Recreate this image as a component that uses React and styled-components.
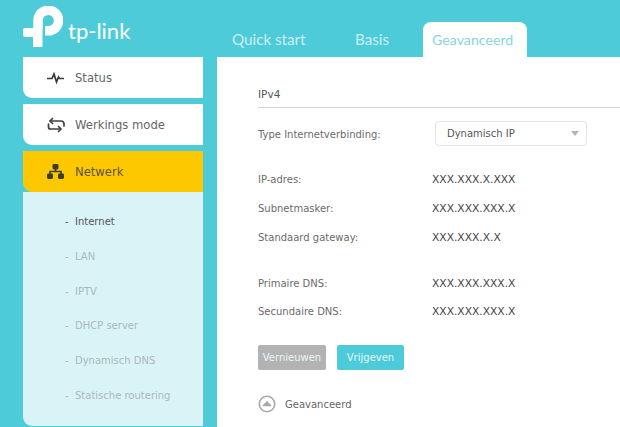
import React from 'react';
import styled, { createGlobalStyle } from 'styled-components';

const Global = createGlobalStyle`
  html, body { margin: 0; padding: 0; height: 100%; overflow: hidden; background: #4ecbd8; }
  #root { height: 100%; }
`;

const Page = styled.div`
  width: 620px;
  height: 427px;
  overflow: hidden;
  background: #4ecbd8;
  font-family: "DejaVu Sans", sans-serif;
  font-size: 10px;
  color: #666;
`;

const Header = styled.header`
  height: 57px;
  display: flex;
  align-items: flex-end;
`;

const Brand = styled.div`
  width: 217px;
  height: 57px;
  box-sizing: border-box;
  padding: 6px 0 0 23px;
  display: flex;
  align-items: flex-start;
  gap: 5px;
`;

const BrandName = styled.span`
  font-family: "Lato", sans-serif;
  font-size: 22px;
  font-weight: 400;
  line-height: 24px;
  margin-top: 13px;
  color: #fff;
`;

const Tabs = styled.nav`
  display: flex;
  align-items: flex-end;
  height: 35px;
`;

const Tab = styled.div`
  font-family: "Lato", sans-serif;
  font-size: ${p => (p.$active ? 14.2 : 15.2)}px;
  line-height: 35px;
  height: 35px;
  box-sizing: border-box;
  width: ${p => p.$w}px;
  padding-left: ${p => p.$pad}px;
  border-radius: 8px 8px 0 0;
  color: ${p => (p.$active ? '#8ad5dd' : '#cdeef2')};
  background: ${p => (p.$active ? '#fff' : 'transparent')};
`;

const Content = styled.div`
  display: flex;
  height: 370px;
`;

const Sidebar = styled.aside`
  width: 180px;
  margin: 0 14px 0 23px;
  display: flex;
  flex-direction: column;
`;

const MenuItem = styled.div`
  height: 41px;
  margin-bottom: ${p => (p.$open ? 0 : 6)}px;
  display: flex;
  align-items: center;
  padding-left: 23px;
  gap: 10px;
  border-radius: 0 0 0 9px;
  background: ${p => (p.$active ? '#fdc800' : '#fff')};
  color: ${p => (p.$active ? '#5c5340' : '#666')};
  font-size: 11.6px;
`;

const IconSlot = styled.span`
  width: 19px;
  height: 19px;
  display: flex;
  align-items: center;
  justify-content: center;
  flex: none;
`;

const SubMenu = styled.ul`
  list-style: none;
  margin: 0;
  padding: 13px 0 0 42px;
  height: 234px;
  box-sizing: border-box;
  background: #daf3f7;
  border-radius: 0 0 0 9px;
`;

const SubItem = styled.li`
  height: 34.8px;
  line-height: 34.8px;
  display: flex;
  color: ${p => (p.$active ? '#555' : '#a9b9bc')};
  white-space: nowrap;
`;

const Dash = styled.span`
  width: 10px;
  flex: none;
`;

const Main = styled.main`
  flex: 1;
  background: #fff;
  padding: 26px 0 0 41px;
`;

const SectionTitle = styled.div`
  height: 24px;
  line-height: 22px;
  border-bottom: 1px solid #d4d4d4;
  color: #555;
  font-size: 10.5px;
`;

const SelectRow = styled.div`
  display: flex;
  align-items: center;
  height: 25px;
  margin-top: 13px;
  margin-bottom: 18px;
`;

const Row = styled.div`
  display: flex;
  align-items: center;
  box-sizing: border-box;
  padding-top: 2px;
  height: ${p => (p.$short ? 28 : 29)}px;
  margin-bottom: ${p => (p.$gap ? 17 : 0)}px;
`;

const Label = styled.span`
  width: 174px;
  flex: none;
  color: #6b6b6b;
  white-space: nowrap;
`;

const SelectLabel = styled(Label)`
  padding-top: 2px;
`;

const Value = styled.span`
  color: #444;
  font-size: 10.7px;
  white-space: nowrap;
`;

const Select = styled.div`
  width: 152px;
  height: 25px;
  box-sizing: border-box;
  border: 1px solid #e4e4e4;
  border-radius: 4px;
  display: flex;
  align-items: center;
  justify-content: space-between;
  padding: 0 7px 0 11px;
  color: #555;
  margin-left: 3px;
`;

const Caret = styled.span`
  width: 0;
  height: 0;
  border-left: 4.5px solid transparent;
  border-right: 4.5px solid transparent;
  border-top: 5px solid #b5b5b5;
`;

const Buttons = styled.div`
  display: flex;
  gap: 11px;
  margin-top: 20px;
`;

const Button = styled.div`
  width: ${p => p.$w}px;
  height: 25px;
  line-height: 25px;
  text-align: center;
  border-radius: 2px;
  color: #e8f6f8;
  font-weight: 500;
  background: ${p => p.$bg};
`;

const Advanced = styled.div`
  display: flex;
  align-items: center;
  gap: 9px;
  margin-top: 25px;
  color: #666;
`;

const Logo = () => (
  <svg width="40" height="42" viewBox="0 0 40 42" fill="none" style={{ flex: 'none' }}>
    <path d="M15 23 V14.5 A 10.3 10.3 0 1 1 25 24.8 H22" stroke="#fff" strokeWidth="9.5" />
    <path d="M0 24 Q0 22 2 22 H19.5 V41 H10 V31 H2 Q0 31 0 29 Z" fill="#fff" />
  </svg>
);

const StatusIcon = () => (
  <svg width="17" height="12" viewBox="0 0 17 12" fill="none" stroke="#3a3a3a" strokeWidth="1.7">
    <path d="M0 6.5 H5 L7 2 L9.5 10 L11.5 5 L12.5 6.5 H17" />
  </svg>
);

const ModeIcon = () => (
  <svg width="18" height="16" viewBox="0 0 18 16" fill="none" stroke="#404040" strokeWidth="1.7" strokeLinecap="round" strokeLinejoin="round">
    <path d="M3 4 H14 Q17 4 17 7 V9" />
    <path d="M1.5 7 V10 Q1.5 12 3.5 12 H13.5" />
    <path d="M5.5 1.5 L3 4 L5.5 6.5" />
    <path d="M11.5 9.5 L14 12 L11.5 14.5" />
  </svg>
);

const NetIcon = () => (
  <svg width="17" height="15" viewBox="0 0 17 15" fill="none">
    <rect x="5.5" y="0" width="6" height="5.5" rx="1.4" fill="#3d3a30" />
    <rect x="0" y="9.5" width="6" height="5.5" rx="1.4" fill="#3d3a30" />
    <rect x="11" y="9.5" width="6" height="5.5" rx="1.4" fill="#3d3a30" />
    <path d="M8.5 5 V7.5 M3 10 V7.5 H14 V10" stroke="#3d3a30" strokeWidth="1.6" />
  </svg>
);

const UpCircle = () => (
  <svg width="18" height="18" viewBox="0 0 18 18" fill="none" style={{ flex: 'none' }}>
    <circle cx="9" cy="9" r="7.7" stroke="#a8a8a8" strokeWidth="1.6" />
    <path d="M5.5 10.5 L9 7 L12.5 10.5 Z" fill="#a8a8a8" stroke="#a8a8a8" strokeWidth="1.5" strokeLinejoin="round" />
  </svg>
);

const subs = ['Internet', 'LAN', 'IPTV', 'DHCP server', 'Dynamisch DNS', 'Statische routering'];

export default function App() {
  return (
    <Page>
      <Global />
      <Header>
        <Brand>
          <Logo />
          <BrandName>tp-link</BrandName>
        </Brand>
        <Tabs>
          <Tab $w={123} $pad={15}>Quick start</Tab>
          <Tab $w={83} $pad={15}>Basis</Tab>
          <Tab $w={104} $pad={9} $active>Geavanceerd</Tab>
        </Tabs>
      </Header>
      <Content>
        <Sidebar>
          <MenuItem><IconSlot><StatusIcon /></IconSlot>Status</MenuItem>
          <MenuItem><IconSlot><ModeIcon /></IconSlot>Werkings mode</MenuItem>
          <MenuItem $active $open><IconSlot><NetIcon /></IconSlot>Netwerk</MenuItem>
          <SubMenu>
            {subs.map((s, i) => (
              <SubItem key={s} $active={i === 0}><Dash>-</Dash>{s}</SubItem>
            ))}
          </SubMenu>
        </Sidebar>
        <Main>
          <SectionTitle>IPv4</SectionTitle>
          <SelectRow>
            <SelectLabel>Type Internetverbinding:</SelectLabel>
            <Select>Dynamisch IP<Caret /></Select>
          </SelectRow>
          <Row><Label>IP-adres:</Label><Value>XXX.XXX.X.XXX</Value></Row>
          <Row><Label>Subnetmasker:</Label><Value>XXX.XXX.XXX.X</Value></Row>
          <Row $gap><Label>Standaard gateway:</Label><Value>XXX.XXX.X.X</Value></Row>
          <Row $short><Label>Primaire DNS:</Label><Value>XXX.XXX.XXX.X</Value></Row>
          <Row><Label>Secundaire DNS:</Label><Value>XXX.XXX.XXX.X</Value></Row>
          <Buttons>
            <Button $w={68} $bg="#b3b3b3">Vernieuwen</Button>
            <Button $w={67} $bg="#4ecbd8">Vrijgeven</Button>
          </Buttons>
          <Advanced><UpCircle />Geavanceerd</Advanced>
        </Main>
      </Content>
    </Page>
  );
}
